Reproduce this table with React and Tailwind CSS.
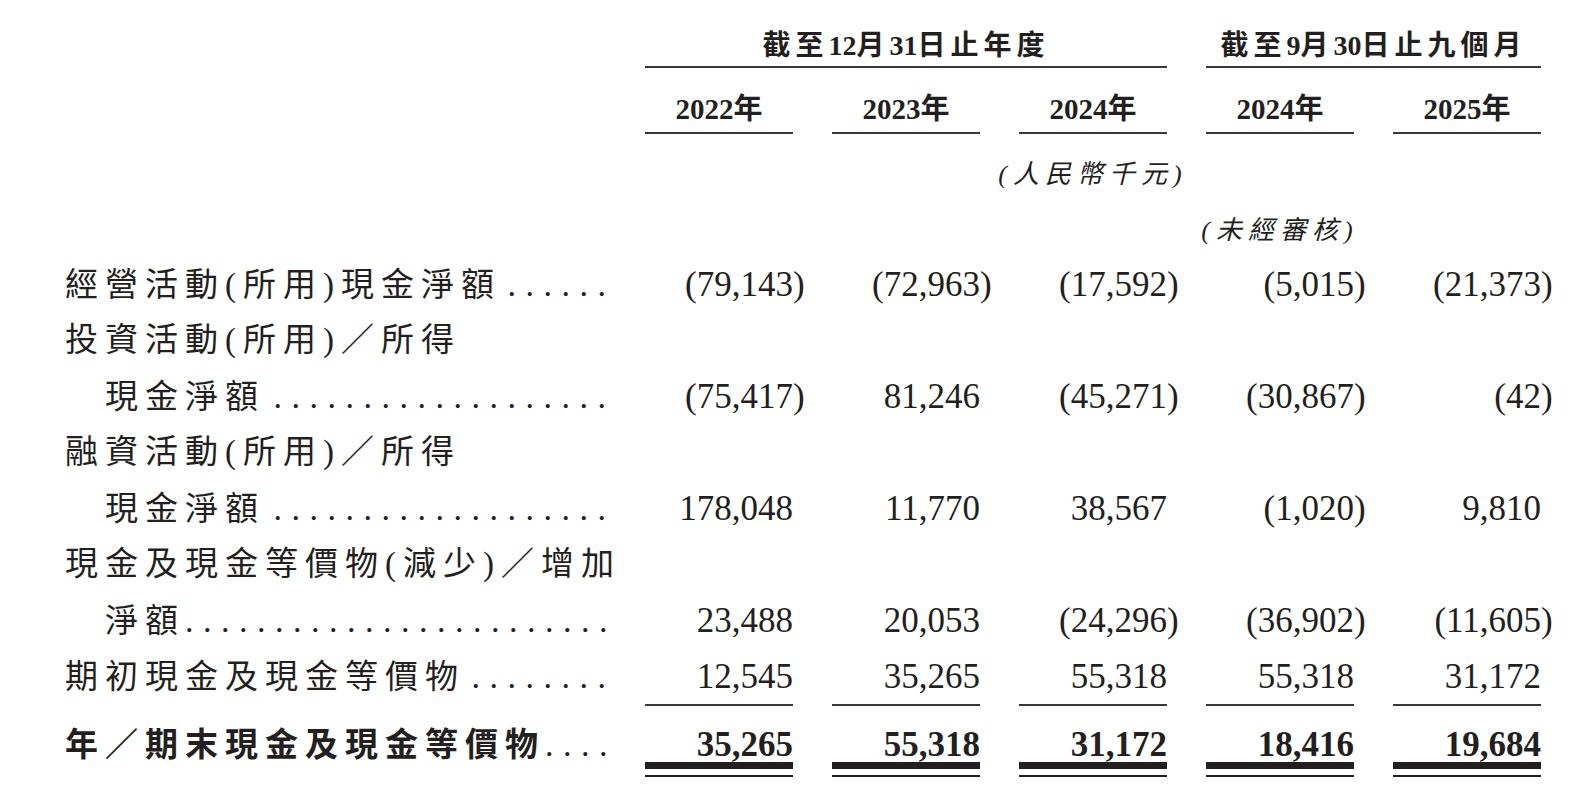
import React from 'react';

const rows = [
  { label: '經營活動(所用)現金淨額', dots: 6, values: [-79143, -72963, -17592, -5015, -21373] },
  { label: '投資活動(所用)／所得' },
  { label: '現金淨額', indent: true, dots: 19, values: [-75417, 81246, -45271, -30867, -42] },
  { label: '融資活動(所用)／所得' },
  { label: '現金淨額', indent: true, dots: 19, values: [178048, 11770, 38567, -1020, 9810] },
  { label: '現金及現金等價物(減少)／增加' },
  { label: '淨額', indent: true, dots: 24, values: [23488, 20053, -24296, -36902, -11605] },
  { label: '期初現金及現金等價物', dots: 8, values: [12545, 35265, 55318, 55318, 31172], underline: true },
];

const totals = [35265, 55318, 31172, 18416, 19684];

const grid = 'grid grid-cols-[541px_repeat(5,148px)] gap-x-[39px]';

function Num({ v }) {
  const s = Math.abs(v).toLocaleString('en-US');
  if (v < 0) {
    return (
      <>
        ({s}
        <span className="inline-block w-0">)</span>
      </>
    );
  }
  return <>{s}</>;
}

function Label({ text, indent, bold, dots }) {
  return (
    <div className={`flex items-baseline whitespace-nowrap ${indent ? 'pl-[40px]' : ''}`}>
      <span className={`text-[33px] tracking-[7px] ${bold ? 'font-bold' : ''}`}>{text}</span>
      {dots ? (
        <>
          <span className="flex-1" />
          <span className="text-[34px] tracking-[9.5px] mr-[-9.5px]">{'.'.repeat(dots)}</span>
        </>
      ) : null}
    </div>
  );
}

export default function App() {
  return (
    <div className="w-[1580px] h-[788px] overflow-hidden bg-white pl-[65px] text-[#231f20] font-['Liberation_Serif','Noto_Sans_CJK_TC',serif]">
      {/* period headers */}
      <div className={grid}>
        <div />
        <div className="col-span-3 border-b-2 border-[#3b3738] pt-[29px] pb-[3px] text-center text-[28px] leading-[34px] font-bold">
          <span className="tracking-[5px]">截至</span>12<span className="tracking-[5px]">月</span>31
          <span className="tracking-[5px]">日止年度</span>
        </div>
        <div className="col-span-2 border-b-2 border-[#3b3738] pt-[29px] pb-[3px] text-center text-[28px] leading-[34px] font-bold">
          <span className="tracking-[5px]">截至</span>9<span className="tracking-[5px]">月</span>30
          <span className="tracking-[5px]">日止九個月</span>
        </div>
      </div>

      {/* years */}
      <div className={grid}>
        <div />
        {['2022', '2023', '2024', '2024', '2025'].map((y, i) => (
          <div
            key={i}
            className="border-b-2 border-[#3b3738] pt-[24px] pb-[6px] text-center text-[29px] leading-[34px] font-bold"
          >
            {y}年
          </div>
        ))}
      </div>

      <div className={grid}>
        <div />
        <div />
        <div />
        <div className="flex justify-center whitespace-nowrap pt-[24px] text-[26px] leading-[34px] italic tracking-[6px]">
          (人民幣千元)
        </div>
      </div>

      <div className={grid}>
        <div />
        <div />
        <div />
        <div />
        <div className="flex justify-center whitespace-nowrap pt-[22px] text-[26px] leading-[34px] italic tracking-[6px]">
          (未經審核)
        </div>
      </div>

      {/* body */}
      <div className="mt-[9px] flex flex-col">
        {rows.map((r, i) => (
          <div key={i} className={`${grid} ${r.underline ? 'h-[54px]' : 'h-[56px]'} leading-[55px]`}>
            <Label text={r.label} indent={r.indent} dots={r.dots} />
            {(r.values || [null, null, null, null, null]).map((v, j) => (
              <div
                key={j}
                className={`whitespace-nowrap text-right text-[35px] ${r.underline ? 'border-b-2 border-[#3b3738]' : ''}`}
              >
                {v !== null && <Num v={v} />}
              </div>
            ))}
          </div>
        ))}

        <div className={`${grid} mt-[24px] leading-[35px]`}>
          <Label text="年／期末現金及現金等價物" bold dots={4} />
          {totals.map((v, j) => (
            <div key={j} className="flex flex-col">
              <div className="text-right text-[35px] font-bold">
                <Num v={v} />
              </div>
              <div className="h-[7px] bg-[#231f20]" />
              <div className="mt-[6px] h-[2px] bg-[#231f20]" />
            </div>
          ))}
        </div>
      </div>
    </div>
  );
}
